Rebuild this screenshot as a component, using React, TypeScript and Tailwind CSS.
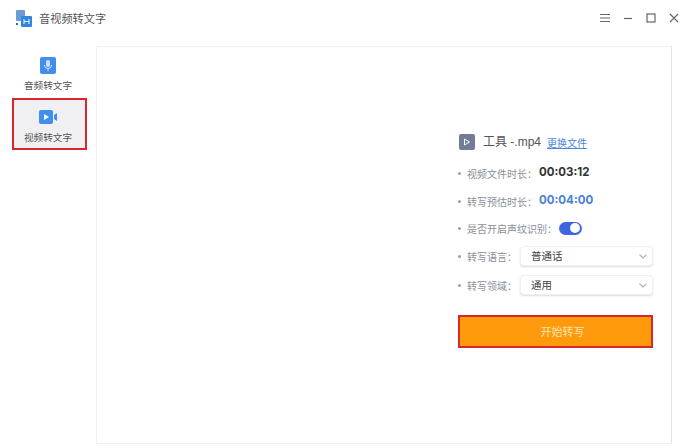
import React from "react";

const font = { fontFamily: '"Noto Sans CJK SC","Liberation Sans",sans-serif' };

function Chevron() {
  return (
    <svg width="8" height="5" viewBox="0 0 8 5" fill="none" stroke="#a8adb5" strokeWidth="1.1">
      <path d="M0.5 0.7l3.5 3.3 3.5-3.3" />
    </svg>
  );
}

function Label({ children }: { children: React.ReactNode }) {
  return (
    <div className="flex items-center text-[10px] text-[#8a8f99] shrink-0 whitespace-nowrap">
      <span className="w-[3px] h-[3px] rounded-full bg-[#9aa0aa] mr-[6px] shrink-0" />
      {children}
    </div>
  );
}

function Select({ value }: { value: string }) {
  return (
    <div className="flex-1 h-[20px] flex items-center justify-between bg-white rounded-[4px] border border-[#f0f0f0] shadow-[0_1px_2px_rgba(0,0,0,0.14)] pl-[10px] pr-[5px] text-[10.5px] text-[#444444]">
      <span>{value}</span>
      <Chevron />
    </div>
  );
}

export default function App() {
  return (
    <div className="w-[691px] h-[448px] bg-white flex flex-col overflow-hidden" style={font}>
      <header className="h-[46px] shrink-0 flex items-center pl-[15px] pr-[12px]">
        <svg width="18" height="18" viewBox="0 0 18 18" className="mr-[6px] -mt-[9px]">
          <rect x="1" y="0" width="9" height="11" rx="1" fill="#6b9bd8" />
          <rect x="6" y="6" width="11" height="11" rx="1" fill="#2f86e0" />
          <path d="M9 9v5M14 9v5M9 11.5h5" stroke="#ffffff" strokeWidth="1" fill="none" />
          <rect x="1" y="13" width="2" height="2" fill="#2f6fc0" />
        </svg>
        <span className="text-[11.2px] text-[#555555] -mt-[10px]">音视频转文字</span>
        <div className="ml-auto flex items-center gap-[13px] -mt-[10px] text-[#666666]">
          <svg width="10" height="10" viewBox="0 0 10 10" stroke="#666" strokeWidth="1.2"><path d="M0 1.5h10M0 5h10M0 8.5h10" /></svg>
          <svg width="10" height="10" viewBox="0 0 10 10" stroke="#666" strokeWidth="1.2"><path d="M1 5.5h8" /></svg>
          <svg width="10" height="10" viewBox="0 0 10 10" stroke="#666" strokeWidth="1.2" fill="none"><rect x="1" y="1" width="8" height="8" /></svg>
          <svg width="10" height="10" viewBox="0 0 10 10" stroke="#666" strokeWidth="1.1"><path d="M1 1l8 8M9 1l-8 8" /></svg>
        </div>
      </header>
      <div className="flex-1 flex pb-[4px] pr-[19px]">
        <aside className="w-[96px] shrink-0 pl-[12px] pr-[9px] flex flex-col">
          <div className="h-[52px] flex flex-col items-center pt-[11px] pr-[3px]">
            <svg width="16" height="17" viewBox="0 0 16 17">
              <rect width="16" height="17" rx="2" fill="#3f8ef0" />
              <rect x="6" y="3" width="4" height="7" rx="2" fill="#cfe3fb" />
              <path d="M4.5 8a3.5 3.5 0 007 0M8 11.5V14" stroke="#cfe3fb" fill="none" />
            </svg>
            <span className="text-[9.6px] text-[#555555] mt-[4px] leading-[14px]">音频转文字</span>
          </div>
          <div className="h-[52px] flex flex-col items-center pt-[10px] pr-[3px] bg-[#f0f0f3] border-2 border-[#d8262a]">
            <svg width="18" height="14" viewBox="0 0 18 14">
              <rect width="14" height="14" rx="2" fill="#3f8ef0" />
              <path d="M5 4l5 3-5 3z" fill="#ffffff" />
              <path d="M15 5l3-2v8l-3-2z" fill="#3f8ef0" />
            </svg>
            <span className="text-[9.6px] text-[#555555] mt-[6px] leading-[14px]">视频转文字</span>
          </div>
        </aside>
        <main className="flex-1 border border-[#f0f0f0] border-r-[#e4e4e4] flex justify-end pr-[18px] pt-[86px]">
          <div className="w-[195px] flex flex-col">
            <div className="h-[18px] flex items-center">
              <div className="w-[16px] h-[16px] rounded-[2px] bg-[#737c96] flex items-center justify-center ml-[1px] mr-[8px]">
                <svg width="8" height="8" viewBox="0 0 8 8" fill="none" stroke="#fff" strokeWidth="1"><path d="M1.5 1l5 3-5 3z" /></svg>
              </div>
              <span className="text-[12px] text-[#555555]" style={{ fontFamily: '"Liberation Sans","Noto Sans CJK SC",sans-serif' }}>工具 -.mp4</span>
              <span className="text-[10px] text-[#4a86e0] underline ml-[6px]">更换文件</span>
            </div>
            <div className="h-[18px] mt-[13px] flex items-center">
              <Label>视频文件时长：</Label>
              <span className="ml-[2px] text-[11.5px] font-bold text-[#333333]" style={{ fontFamily: '"Inter",sans-serif' }}>00:03:12</span>
            </div>
            <div className="h-[18px] mt-[10px] flex items-center">
              <Label>转写预估时长：</Label>
              <span className="ml-[2px] text-[11.5px] font-bold text-[#4a7fd8]" style={{ fontFamily: '"Inter",sans-serif' }}>00:04:00</span>
            </div>
            <div className="h-[18px] mt-[9px] flex items-center">
              <Label>是否开启声纹识别：</Label>
              <span className="ml-[2px] w-[23px] h-[13px] rounded-full bg-[#3d66e0] flex items-center justify-end pr-[2px]">
                <span className="w-[10px] h-[10px] rounded-full bg-white" />
              </span>
            </div>
            <div className="h-[20px] mt-[9px] flex items-center">
              <div className="w-[62px] shrink-0"><Label>转写语言：</Label></div>
              <Select value="普通话" />
            </div>
            <div className="h-[20px] mt-[9px] flex items-center">
              <div className="w-[62px] shrink-0"><Label>转写领域：</Label></div>
              <Select value="通用" />
            </div>
            <button className="mt-[20px] h-[33px] bg-[#ff9a0d] border-2 border-[#d8262a] pl-[14px] text-[11px] text-[#ffe3b0]">开始转写</button>
          </div>
        </main>
      </div>
    </div>
  );
}
